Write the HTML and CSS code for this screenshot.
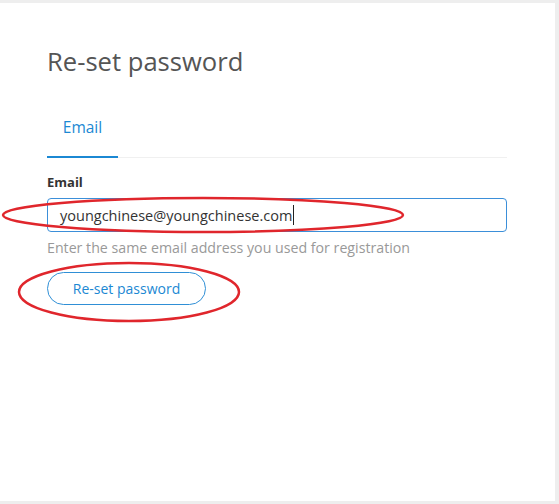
FILE: index.html
```html
<!DOCTYPE html>
<html lang="en">
<head>
    <meta charset="UTF-8">
    <meta name="viewport" content="width=device-width, initial-scale=1.0">
    <title>Re-set password</title>
    <link rel="stylesheet" href="styles.css">
</head>
<body>
    <div class="frame">
        <div class="card">
            <h2 class="title">Re-set password</h2>

            <div class="tabs">
                <div class="tab active">Email</div>
            </div>

            <form class="form">
                <label class="label" for="email">Email</label>
                <div class="field">
                    <span class="input" id="email">youngchinese@youngchinese.com<span class="caret"></span></span>
                </div>
                <p class="hint">Enter the same email address you used for registration</p>
                <button type="button" class="btn">Re-set password</button>
            </form>

            <!-- red marks drawn over the screenshot -->
            <svg class="mark mark-input" width="404" height="40" viewBox="0 0 404 40">
                <ellipse cx="202" cy="20" rx="200" ry="17" fill="none" stroke="#e0262c" stroke-width="2.5"/>
            </svg>
            <svg class="mark mark-btn" width="226" height="64" viewBox="0 0 226 64">
                <ellipse cx="113" cy="32" rx="110" ry="29" fill="none" stroke="#e0262c" stroke-width="2.5"/>
            </svg>
        </div>
    </div>
</body>
</html>
```

FILE: styles.css
```css
/* Global reset */
* {
    margin: 0;
    padding: 0;
    box-sizing: border-box;
}

body {
    font-family: 'Open Sans', 'Noto Sans', sans-serif;
    background: #eeeeee;
    width: 559px;
    height: 504px;
    overflow: hidden;
}

/* Outer frame */
.frame {
    padding: 3px 4px 3px 0;
    height: 504px;
}

/* Card */
.card {
    position: relative;
    background: #ffffff;
    height: 498px;
    padding: 41px 48px 0 47px;
}

.title {
    font-size: 25.6px;
    font-weight: 400;
    color: #555555;
    line-height: 35px;
}

/* Tabs */
.tabs {
    display: flex;
    margin-top: 37px;
    border-bottom: 1px solid #f0f0f0;
}

.tab {
    width: 71px;
    text-align: center;
    font-size: 15.5px;
    line-height: 22px;
    color: #1b88d3;
    padding-bottom: 18px;
    margin-bottom: -1px;
}

.tab.active {
    border-bottom: 2px solid #1b88d3;
}

/* Form */
.form {
    display: flex;
    flex-direction: column;
    align-items: flex-start;
    padding-top: 15px;
}

.label {
    font-size: 13px;
    font-weight: 700;
    color: #333333;
    line-height: 18px;
}

.field {
    width: 100%;
    margin-top: 7px;
}

.input {
    display: flex;
    align-items: center;
    height: 34px;
    border: 1px solid #3b8fd9;
    border-radius: 4px;
    padding-left: 12px;
    font-size: 14.5px;
    color: #333333;
}

.caret {
    display: inline-block;
    width: 1px;
    height: 20px;
    background: #222222;
    margin-left: 1px;
}

.hint {
    margin-top: 7px;
    font-size: 14.2px;
    color: #999999;
    line-height: 18px;
}

.btn {
    margin-top: 15px;
    width: 159px;
    height: 33px;
    border: 1px solid #2f8fd6;
    border-radius: 17px;
    background: #ffffff;
    color: #1b88d3;
    font-family: inherit;
    font-size: 14px;
    cursor: pointer;
}

/* Annotation marks */
.mark {
    position: absolute;
    pointer-events: none;
}

.mark-input {
    left: 1px;
    top: 192px;
}

.mark-btn {
    left: 16px;
    top: 257px;
}
```
